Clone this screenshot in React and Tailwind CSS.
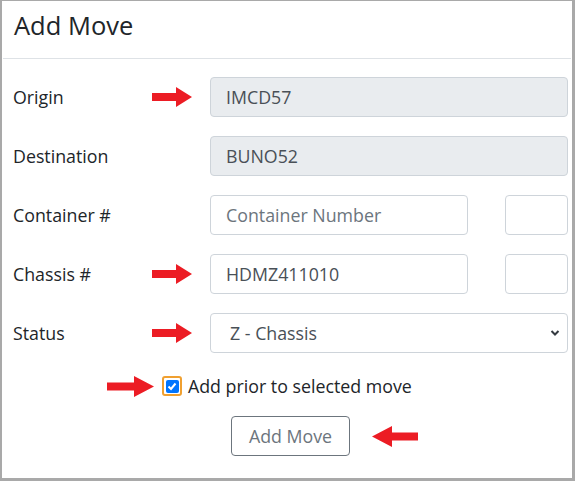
import React from "react";

const F = { fontFamily: '"Open Sans", "Noto Sans", sans-serif' };

function ArrowRight() {
  return (
    <svg width="40" height="20" viewBox="0 0 40 20">
      <polygon points="0,6 24,6 24,0 40,10 24,20 24,14 0,14" fill="#ec1c24" />
    </svg>
  );
}
function ArrowLeft() {
  return (
    <svg width="46" height="21" viewBox="0 0 46 21">
      <polygon points="46,6.5 20,6.5 20,0 0,10.5 20,21 20,14.5 46,14.5" fill="#ec1c24" />
    </svg>
  );
}

function Row({ label, arrow, children }) {
  return (
    <div className="flex items-center h-10">
      <div className="w-[139px] text-[17.8px] text-[#212529]">{label}</div>
      <div className="w-[58px] flex items-center">{arrow && <ArrowRight />}</div>
      <div className="flex-1 flex items-center">{children}</div>
    </div>
  );
}

export default function App() {
  return (
    <div style={F} className="w-[575px] h-[481px] bg-[#a9a9a9] pl-[2px] pr-[3px] pb-[3px] pt-[1px]">
      <div className="w-full h-full bg-white flex flex-col">
        <div className="h-[58px] border-b border-[#dee2e6] px-[11px] pt-[5px] mx-[1px]">
          <h1 className="text-[25.5px] leading-[38px] text-[#212529]">Add Move</h1>
        </div>
        <div className="flex flex-col gap-[19px] pl-[11px] pr-[4px] pt-[18px]">
          <Row label="Origin" arrow>
            <div className="w-full h-10 rounded border border-[#ced4da] bg-[#e9ecef] px-[15px] flex items-center text-[17.8px] text-[#495057]">IMCD57</div>
          </Row>
          <Row label="Destination">
            <div className="w-full h-10 rounded border border-[#ced4da] bg-[#e9ecef] px-[15px] flex items-center text-[17.8px] text-[#495057]">BUNO52</div>
          </Row>
          <Row label="Container #">
            <div className="flex w-full gap-[37px]">
              <input readOnly placeholder="Container Number" className="w-[258px] h-10 rounded border border-[#ced4da] bg-white px-[15px] text-[17.8px] text-[#495057] placeholder:text-[#6c757d] outline-none" />
              <div className="flex-1 h-10 rounded border border-[#ced4da] bg-white" />
            </div>
          </Row>
          <Row label="Chassis #" arrow>
            <div className="flex w-full gap-[37px]">
              <div className="w-[258px] h-10 rounded border border-[#ced4da] bg-white px-[15px] flex items-center text-[17.8px] text-[#495057]">HDMZ411010</div>
              <div className="flex-1 h-10 rounded border border-[#ced4da] bg-white" />
            </div>
          </Row>
          <Row label="Status" arrow>
            <div className="w-full h-10 rounded border border-[#ced4da] bg-white pl-[19px] pr-[7px] flex items-center justify-between text-[17.8px] text-[#495057]">
              <span>Z - Chassis</span>
              <svg width="10" height="8" viewBox="0 0 10 8">
                <path d="M1.5 2 L5 5.5 L8.5 2" stroke="#343a40" strokeWidth="2" fill="none" />
              </svg>
            </div>
          </Row>
        </div>
        <div className="flex items-center mt-[23px] h-[20px]">
          <div className="ml-[105px] w-[55px] flex items-center">
            <svg width="47" height="21" viewBox="0 0 47 21"><polygon points="0,6.5 27,6.5 27,0 47,10.5 27,21 27,14.5 0,14.5" fill="#ec1c24" /></svg>
          </div>
          <div className="w-[20px] h-[20px] rounded-[3px] border-2 border-[#f0a030] flex items-center justify-center">
            <div className="w-[13px] h-[13px] rounded-[2px] bg-[#0075ff] flex items-center justify-center">
              <svg width="10" height="9" viewBox="0 0 10 9"><path d="M1.5 4.5 L4 7 L8.5 1.5" stroke="white" strokeWidth="2" fill="none" /></svg>
            </div>
          </div>
          <span className="ml-[6px] text-[17.8px] text-[#212529]">Add prior to selected move</span>
        </div>
        <div className="flex items-center mt-[20px]">
          <div className="ml-[229px] w-[119px] h-10 rounded border border-[#6c757d] flex items-center justify-center text-[17.8px] text-[#6c757d]">Add Move</div>
          <div className="ml-[22px]"><ArrowLeft /></div>
        </div>
      </div>
    </div>
  );
}
